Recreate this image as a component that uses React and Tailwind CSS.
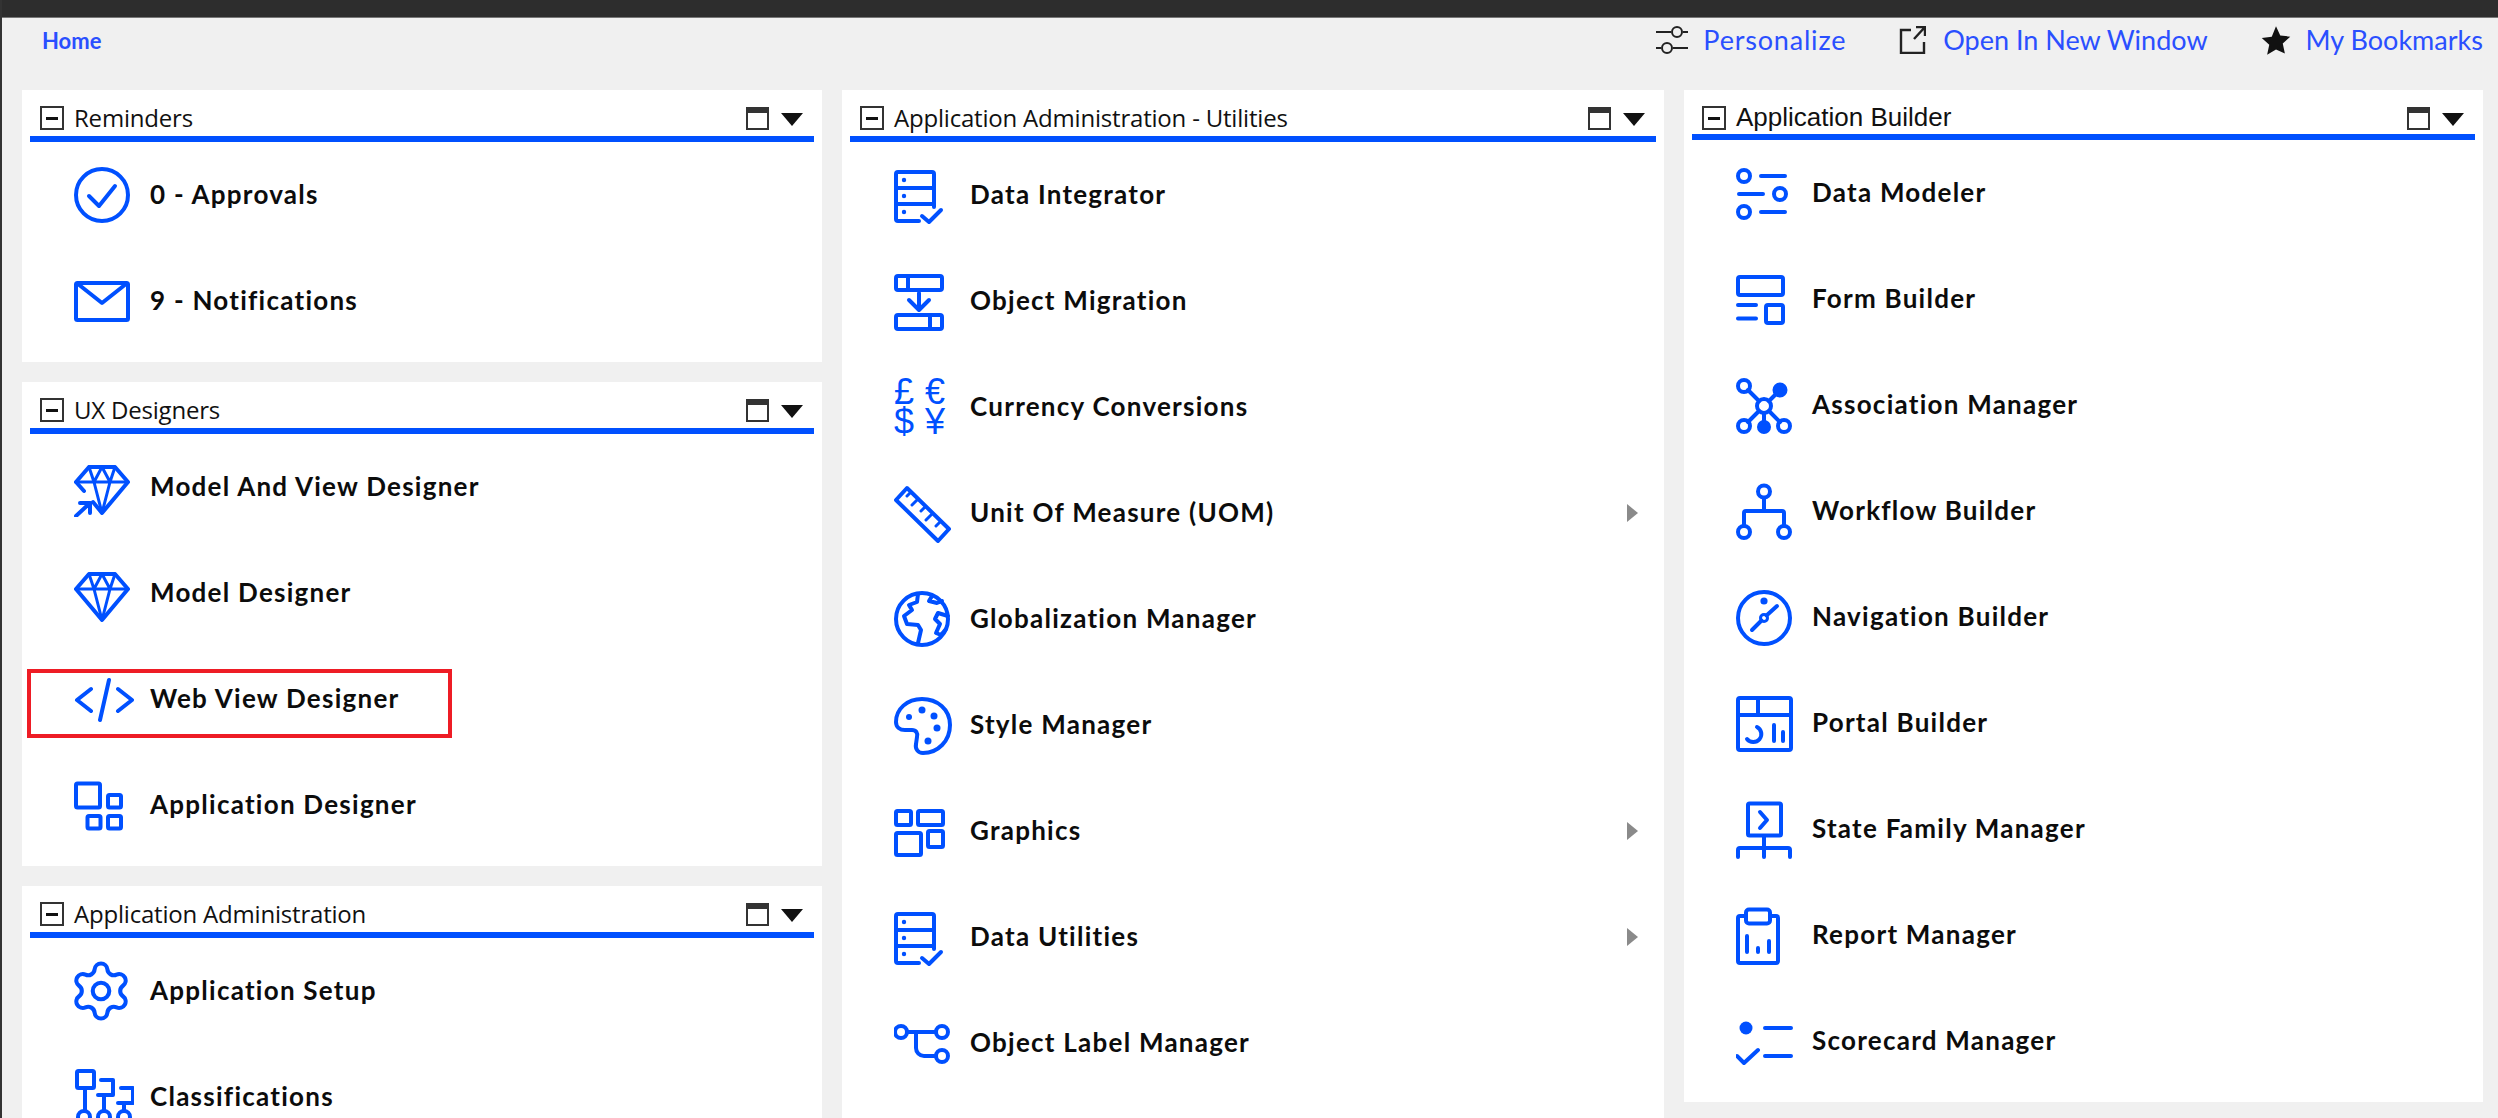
import { Settings } from 'lucide-react'

const blue = '#0050ff'

function Svg({ children, w = 60 }) {
  return (
    <svg width={w} height="60" viewBox={`0 0 ${w} 60`} fill="none" stroke={blue} strokeWidth="4" strokeLinecap="round" strokeLinejoin="round" className="shrink-0">
      {children}
    </svg>
  )
}

const DataCheck = () => (
  <Svg>
    <path d="M25 56H4a2 2 0 0 1-2-2V9a2 2 0 0 1 2-2h34a2 2 0 0 1 2 2v33M2 23h38M2 39h38" />
    <path d="M28 51l7 6 12-12" />
    <circle cx="10" cy="15" r="1.2" fill={blue} strokeWidth="2" />
    <circle cx="10" cy="31" r="1.2" fill={blue} strokeWidth="2" />
    <circle cx="10" cy="47" r="1.2" fill={blue} strokeWidth="2" />
  </Svg>
)

const Diamond = ({ y = 0, arrow }) => (
  <Svg>
    <g transform={`translate(0 ${y})`}>
      <path d={arrow ? 'M15 10h26l13 15-26 31-9-11M2 25l8 9M15 10L2 25' : 'M15 10h26l13 15-26 31L2 25z'} />
      <path d="M2 25h52M20 25l8 31 8-31M15 10l5 15 8-15 8 15 5-15" strokeWidth="3" />
      {arrow && <path d="M2 59l14-13M6 46h10v10" />}
    </g>
  </Svg>
)

const icons = {
  check: (
    <Svg>
      <circle cx="28" cy="30" r="26" />
      <path d="M15 31l10 10 16-20" />
    </Svg>
  ),
  mail: (
    <Svg>
      <rect x="2" y="12" width="52" height="37" rx="1.5" />
      <path d="M4 13l24 19 24-19" />
    </Svg>
  ),
  modelView: <Diamond arrow />,
  model: <Diamond y={1} />,
  code: (
    <Svg>
      <path d="M17 20L3 31l14 11M44 20l14 11-14 11M35 11l-9 40" />
    </Svg>
  ),
  appDesigner: (
    <Svg>
      <rect x="2" y="8.500" width="24" height="24" rx="1.5" />
      <rect x="34" y="20" width="13" height="12.500" rx="1.5" />
      <rect x="13.500" y="41" width="13" height="12.500" rx="1.5" />
      <rect x="34" y="41" width="13" height="12.500" rx="1.5" />
    </Svg>
  ),
  gear: <Settings size={66} color={blue} strokeWidth={1.5} className="shrink-0 -ml-[6px] -my-[3px]" />,
  classify: (
    <Svg>
      <rect x="3" y="4" width="17" height="17" rx="1.5" />
      <path d="M11 21v23M27 13h12v15H24M30 28v16M47 21h12v15H44M50 36v8" />
      <circle cx="10" cy="50" r="6" />
      <circle cx="30" cy="50" r="6" />
      <circle cx="50" cy="50" r="6" />
    </Svg>
  ),
  migrate: (
    <Svg>
      <rect x="2" y="5" width="46" height="14" rx="2" />
      <path d="M14 5v14" />
      <path d="M25 22v16M15 29l10 10 10-10" />
      <rect x="2" y="44" width="46" height="14" rx="2" />
      <path d="M36 44v14" />
    </Svg>
  ),
  currency: (
    <div className="shrink-0 w-[60px] h-[60px] grid grid-cols-[31px_29px] content-center text-[36px] leading-[30px] text-[#0050ff] font-['Liberation_Sans',sans-serif]">
      <span>£</span>
      <span>€</span>
      <span>$</span>
      <span>¥</span>
    </div>
  ),
  ruler: (
    <Svg>
      <path d="M2 17L13 5l42 41-11 12z" />
      <path d="M17 9l-4 4M24 16l-6 6M31 24l-4 4M38 31l-6 6M46 39l-4 4" strokeWidth="3" />
    </Svg>
  ),
  globe: (
    <Svg>
      <circle cx="28" cy="30" r="26" />
      <path d="M24 5l-1 8-8 3 3 5-8 6 3 8 11 1 3 5-3 13M38 7l-3 5 8 2 5-2M54 27l-10-3-3 6 5 5-4 9 5 2 5-6" />
    </Svg>
  ),
  palette: (
    <Svg>
      <path d="M28 4C13 4 2 14 2 27c0 5 4 8 9 8h7c4 0 6 3 5 7l-1 7c-1 5 2 9 7 9 15 0 27-12 27-28S43 4 28 4z" />
      <circle cx="15" cy="22" r="3" fill={blue} stroke="none" />
      <circle cx="28" cy="15" r="3.500" fill={blue} stroke="none" />
      <circle cx="40" cy="21" r="3.500" fill={blue} stroke="none" />
      <circle cx="43" cy="33" r="3.500" fill={blue} stroke="none" />
      <circle cx="34" cy="46" r="3.500" fill={blue} stroke="none" />
    </Svg>
  ),
  graphics: (
    <Svg>
      <rect x="2" y="10" width="15" height="14" rx="1.5" />
      <rect x="24" y="10" width="25" height="14" rx="1.5" />
      <rect x="2" y="32" width="25" height="22" rx="1.5" />
      <rect x="34" y="30" width="15" height="16" rx="1.5" />
    </Svg>
  ),
  objectLabel: (
    <Svg>
      <circle cx="7" cy="19" r="6" />
      <circle cx="48" cy="19" r="6" />
      <circle cx="48" cy="43" r="6" />
      <path d="M13 19h29M22 19v16a8 8 0 0 0 8 8h12" />
    </Svg>
  ),
  modeler: (
    <Svg>
      <circle cx="8" cy="13" r="6" />
      <circle cx="44" cy="31" r="6" />
      <circle cx="8" cy="49" r="6" />
      <path d="M25 13h24M3 31h24M25 49h24" />
    </Svg>
  ),
  form: (
    <Svg>
      <rect x="2" y="8" width="45" height="18" rx="2" />
      <path d="M2 36h18M2 49.500h18" />
      <rect x="30" y="36" width="17" height="18" rx="2" />
    </Svg>
  ),
  assoc: (
    <Svg>
      <circle cx="28" cy="31" r="7" />
      <circle cx="8" cy="11" r="6" />
      <circle cx="44" cy="15" r="5.500" fill={blue} />
      <circle cx="8" cy="51" r="6" />
      <circle cx="28" cy="52" r="5" fill={blue} />
      <circle cx="48" cy="51" r="6" />
      <path d="M12 15l11 11M33 26l8-8M23 36L12 47M28 38v10M33 36l11 11" />
    </Svg>
  ),
  workflow: (
    <Svg>
      <circle cx="28" cy="10.500" r="6" />
      <circle cx="8" cy="51" r="6" />
      <circle cx="48" cy="51" r="6" />
      <path d="M28 17v13M8 45v-13a2 2 0 0 1 2-2h36a2 2 0 0 1 2 2v13" />
    </Svg>
  ),
  compass: (
    <Svg>
      <circle cx="28" cy="31" r="26" />
      <circle cx="28" cy="31" r="3.500" strokeWidth="3" />
      <path d="M16 43l9.500-9.500M30.500 28.500L41 19" />
      <circle cx="28" cy="14" r="1.600" fill={blue} />
    </Svg>
  ),
  portal: (
    <Svg>
      <rect x="2" y="5" width="53" height="52" rx="2" />
      <path d="M2 22h53M22 5v17" />
      <path d="M21 34a8 8 0 1 1-10 12" />
      <path d="M38 32v16M47 39v9" />
    </Svg>
  ),
  state: (
    <Svg>
      <rect x="12" y="4.500" width="33" height="32" rx="1.5" />
      <path d="M24 13l7 8-7 8" />
      <path d="M28 37v21M2 58v-7a2 2 0 0 1 2-2h48a2 2 0 0 1 2 2v7" />
    </Svg>
  ),
  report: (
    <Svg>
      <path d="M9 11H4a2 2 0 0 0-2 2v43a2 2 0 0 0 2 2h36a2 2 0 0 0 2-2V13a2 2 0 0 0-2-2h-5" />
      <rect x="10" y="4.500" width="24" height="14" rx="3" />
      <path d="M11 31v16M22 43v4M33 36v11" />
    </Svg>
  ),
  scorecard: (
    <Svg>
      <circle cx="10" cy="17" r="6.500" fill={blue} stroke="none" />
      <path d="M29 17h26M29 45h26" />
      <path d="M1 45l7 7L22 39" />
    </Svg>
  ),
}

const columns = [
  {
    panels: [
      { title: 'Reminders', items: [['check', '0 - Approvals'], ['mail', '9 - Notifications']] },
      {
        title: 'UX Designers',
        items: [
          ['modelView', 'Model And View Designer'],
          ['model', 'Model Designer'],
          ['code', 'Web View Designer', false, true],
          ['appDesigner', 'Application Designer'],
        ],
      },
      { title: 'Application Administration', items: [['gear', 'Application Setup'], ['classify', 'Classifications']] },
    ],
  },
  {
    panels: [
      {
        title: 'Application Administration - Utilities',
        tall: true,
        items: [
          ['data', 'Data Integrator'],
          ['migrate', 'Object Migration'],
          ['currency', 'Currency Conversions'],
          ['ruler', 'Unit Of Measure (UOM)', true],
          ['globe', 'Globalization Manager'],
          ['palette', 'Style Manager'],
          ['graphics', 'Graphics', true],
          ['data', 'Data Utilities', true],
          ['objectLabel', 'Object Label Manager'],
        ],
      },
    ],
  },
  {
    panels: [
      {
        title: 'Application Builder',
        arial: true,
        items: [
          ['modeler', 'Data Modeler'],
          ['form', 'Form Builder'],
          ['assoc', 'Association Manager'],
          ['workflow', 'Workflow Builder'],
          ['compass', 'Navigation Builder'],
          ['portal', 'Portal Builder'],
          ['state', 'State Family Manager'],
          ['report', 'Report Manager'],
          ['scorecard', 'Scorecard Manager'],
        ],
      },
    ],
  },
]

function Item({ icon, label, more, marked }) {
  return (
    <div className="relative h-[106px] flex items-center pl-[44px] pr-[18px]">
      {icon === 'data' ? <DataCheck /> : icons[icon]}
      <span className="ml-[16px] pb-[2px] text-[26px] font-bold text-[#0c0c0c] font-['Lato',sans-serif] tracking-[1.25px]">{label}</span>
      {more && <span className="ml-auto w-0 h-0 border-y-[9px] border-y-transparent border-l-[11px] border-l-[#8a8a8a]" />}
      {marked && <div className="absolute left-[-3px] top-[23px] w-[425px] h-[69px] border-[4px] border-[#ee1c25]" />}
    </div>
  )
}

function Panel({ title, items, tall, arial }) {
  return (
    <section className={`bg-white px-[8px] pb-[8px] ${tall ? 'flex-1' : ''}`}>
      <div className={`flex items-center pl-[10px] pr-[11px] pt-[16px] border-b-[6px] border-[#0050ff] ${arial ? 'h-[50px] pb-[4px]' : 'h-[52px] pb-[6px]'}`}>
        <div className="w-[24px] h-[24px] border-2 border-[#333] flex items-center justify-center">
          <div className="w-[12px] h-[3px] bg-[#111]" />
        </div>
        <span className={`ml-[10px] text-[#111] ${arial ? "text-[26px] font-['Liberation_Sans',sans-serif] pb-[2px]" : "text-[24px] font-['Open_Sans',sans-serif] tracking-[-0.2px]"}`}>{title}</span>
        <div className="ml-auto w-[23px] h-[23px] border-2 border-[#333] border-t-[6px]" />
        <div className="ml-[12px] mt-[3px] w-0 h-0 border-x-[11px] border-x-transparent border-t-[13px] border-t-[#111]" />
      </div>
      {items.map(([icon, label, more, marked]) => (
        <Item key={label} icon={icon} label={label} more={more} marked={marked} />
      ))}
    </section>
  )
}

function ToolLink({ icon, label, gap, spaced }) {
  return (
    <div className={`flex items-center ${gap}`}>
      {icon}
      <span className={`text-[27px] text-[#2a4fff] font-['Lato',sans-serif] ${spaced ? 'tracking-[0.8px]' : ''}`}>{label}</span>
    </div>
  )
}

export default function App() {
  return (
    <div className="h-[1118px] w-full overflow-hidden bg-[#f0f0f0] flex flex-col border-l-2 border-[#333]">
      <div className="h-[18px] bg-[#2d2d2d] border-b border-[#777] shrink-0 -ml-[2px]" />
      <div className="h-[72px] shrink-0 flex items-center pl-[40px] pr-[15px] pb-[28px]">
        <span className="text-[22px] font-bold text-[#2a4fff] font-['Lato',sans-serif]">Home</span>
        <div className="ml-auto flex items-center gap-[53px]">
          <ToolLink
            label="Personalize"
            gap="gap-[15px]"
            spaced
            icon={
              <svg width="32" height="30" viewBox="0 0 32 30" fill="none" stroke="#222" strokeWidth="2">
                <path d="M0 7h15M27 7h5M0 23h5M17 23h15" />
                <circle cx="21" cy="7" r="5" />
                <circle cx="11" cy="23" r="5" />
              </svg>
            }
          />
          <ToolLink
            label="Open In New Window"
            gap="gap-[17px]"
            icon={
              <svg width="27" height="28" viewBox="0 0 27 28" fill="none" stroke="#222" strokeWidth="2.4">
                <path d="M12 4H2v23h23V16M15 13L26 1M17 1h9v9" />
              </svg>
            }
          />
          <ToolLink
            label="My Bookmarks"
            gap="gap-[15px]"
            icon={
              <svg width="30" height="30" viewBox="0 0 24 24" fill="#111">
                <path d="M12 1l3.400 7.400 8 .9-6 5.400 1.700 8L12 19.600l-7.100 4.100 1.700-8-6-5.400 8-.9z" />
              </svg>
            }
          />
        </div>
      </div>
      <div className="flex-1 min-h-0 grid grid-cols-[800px_822px_799px] gap-[20px] pl-[20px]">
        {columns.map((col) => (
          <div key={col.panels[0].title} className="flex flex-col gap-[20px] min-w-0">
            {col.panels.map((p) => (
              <Panel key={p.title} {...p} />
            ))}
          </div>
        ))}
      </div>
    </div>
  )
}
